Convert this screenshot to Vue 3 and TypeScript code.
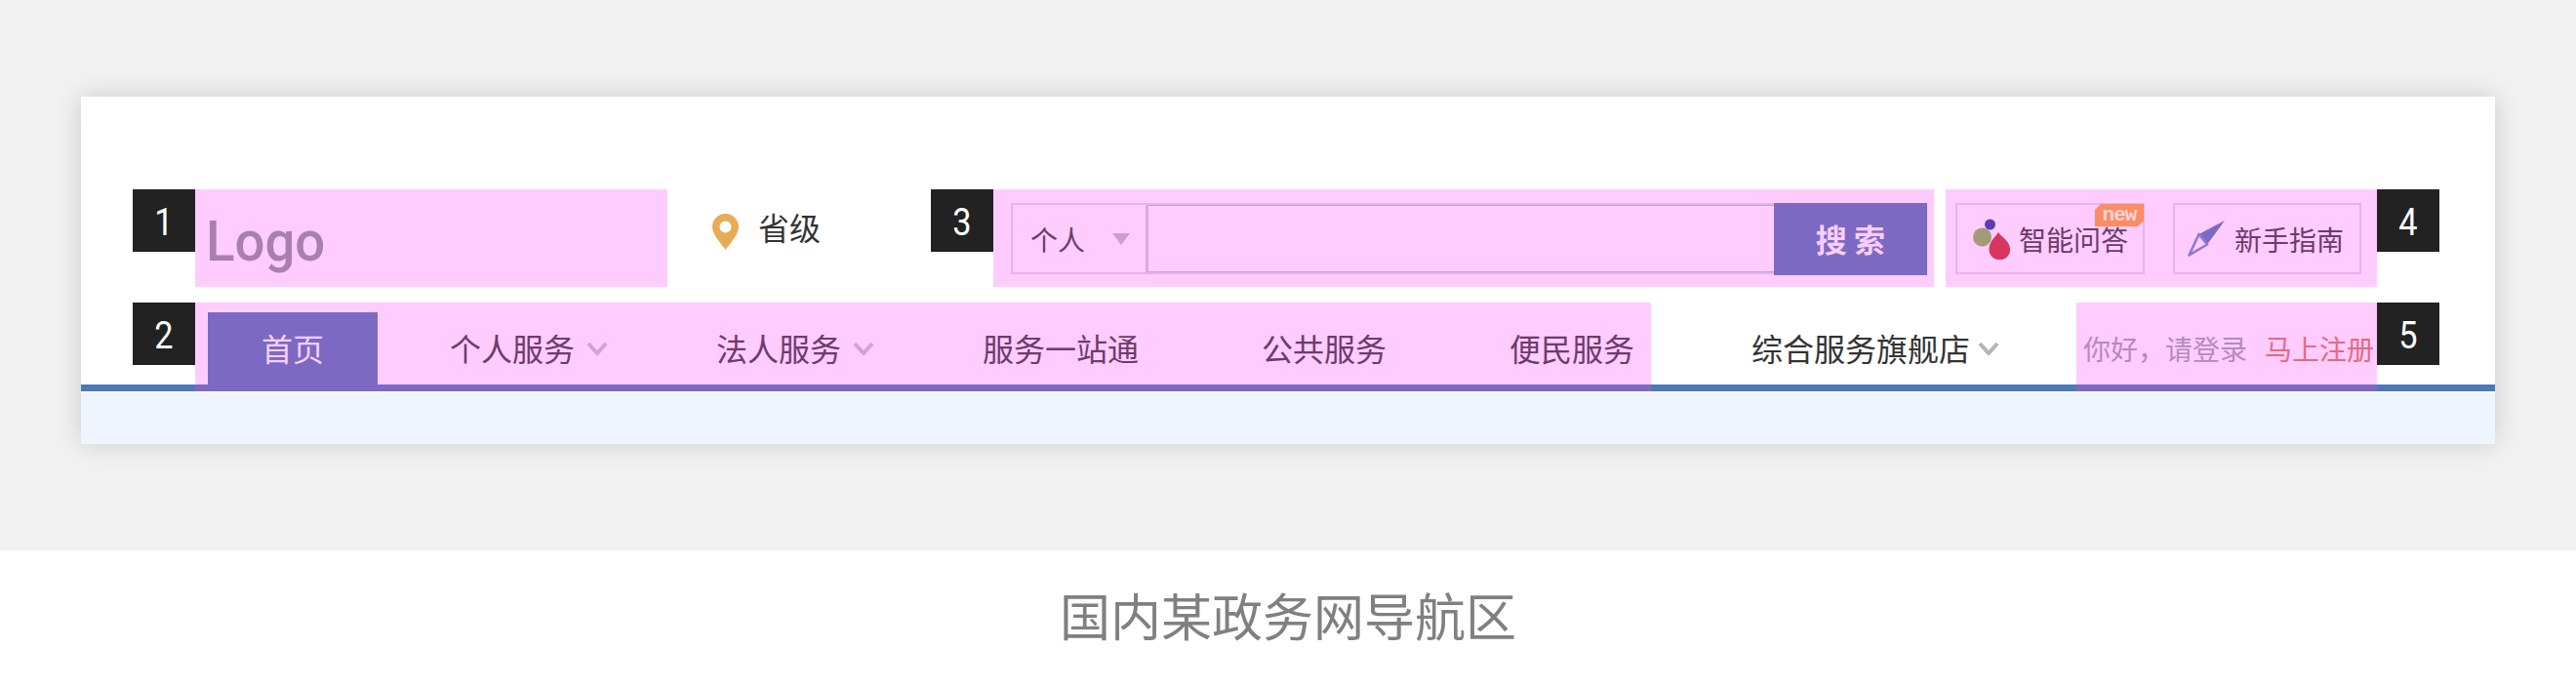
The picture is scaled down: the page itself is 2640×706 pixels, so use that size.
<script setup lang="ts">
interface NavItem { label: string; chevron: boolean }
const navItems: NavItem[] = [
  { label: '个人服务', chevron: true },
  { label: '法人服务', chevron: true },
  { label: '服务一站通', chevron: false },
  { label: '公共服务', chevron: false },
  { label: '便民服务', chevron: false },
]
</script>

<template>
  <div class="page">
    <section class="stage">
      <div class="card">
        <div class="row top">
          <span class="mark"><b>1</b></span>
          <div class="logo-zone"><span class="logo">Logo</span></div>
          <div class="loc">
            <svg class="pin" viewBox="0 0 27 37" width="27" height="37">
              <path fill="#e8ab56" fill-rule="evenodd" d="M13.5 0C6 0 0 6 0 13.5 0 21 8.5 30 13.5 37 18.500 30 27 21 27 13.500 27 6 21 0 13.500 0ZM13.500 7.500a6 6 0 1 1 0 12 6 6 0 0 1 0-12Z" />
            </svg>
            <span>省级</span>
          </div>
          <span class="mark"><b>3</b></span>
          <div class="search-zone">
            <div class="search">
              <div class="scope"><span>个人</span><i class="tri"></i></div>
              <div class="field"></div>
              <div class="go">搜 索</div>
            </div>
          </div>
          <div class="actions">
            <div class="act first">
              <svg class="ic1" viewBox="0 0 39 43" width="39" height="43">
                <circle cx="17.500" cy="7" r="5.500" fill="#5a3fb0" />
                <circle cx="9.500" cy="20" r="9.500" fill="#a39a78" />
                <path fill="#d6365f" d="M26 15c-2 4-9.500 9-9.500 17.500a10.800 10.800 0 0 0 21.600 0C38.100 24 28 19 26 15Z" />
              </svg>
              <span>智能问答</span>
              <span class="badge">new</span>
            </div>
            <div class="act second">
              <svg class="ic2" viewBox="0 0 38 37" width="38" height="37">
                <path fill="#7c69c4" d="M38 0 20 24.500 11.500 14Z" />
                <path fill="none" stroke="#8d7bd0" stroke-width="2.600" stroke-linejoin="round" d="M11.500 14 1.500 35.500 20 24.500Z" />
              </svg>
              <span>新手指南</span>
            </div>
          </div>
          <span class="mark"><b>4</b></span>
        </div>
        <div class="row bottom">
          <span class="mark"><b>2</b></span>
          <nav class="nav">
            <a class="tab">首页</a>
            <a v-for="item in navItems" :key="item.label" class="item" :class="{ plain: !item.chevron }">
              <span>{{ item.label }}</span>
              <svg v-if="item.chevron" class="chev" viewBox="0 0 22 14" width="22" height="14">
                <path d="M2 2 11 12 20 2" fill="none" stroke="#cfa3d6" stroke-width="4" />
              </svg>
            </a>
          </nav>
          <div class="shop">
            <span>综合服务旗舰店</span>
            <svg class="chev" viewBox="0 0 22 14" width="22" height="14">
              <path d="M2 2 11 12 20 2" fill="none" stroke="#b5b5b5" stroke-width="4" />
            </svg>
          </div>
          <div class="login">
            <span class="hello">你好，请登录</span>
            <span class="reg">马上注册</span>
          </div>
          <span class="mark"><b>5</b></span>
        </div>
        <div class="strip"></div>
      </div>
    </section>
    <footer class="caption">国内某政务网导航区</footer>
  </div>
</template>

<style>
html, body { margin: 0; background: #fff; }
</style>

<style scoped>
.page {
  width: 2640px;
  height: 706px;
  overflow: hidden;
  font-family: "Noto Sans CJK SC", "Noto Sans", sans-serif;
  white-space: nowrap;
}
.stage {
  height: 564px;
  box-sizing: border-box;
  padding: 99px 83px 0;
  background: #f1f1f1;
}
.card {
  height: 356px;
  box-sizing: border-box;
  padding-top: 95px;
  background: #fff;
  box-shadow: 0 0 24px rgba(0, 0, 0, 0.16);
}
.row { display: flex; padding: 0 57px 0 53px; }
.top { height: 100px; margin-bottom: 16px; }
.bottom {
  height: 91px;
  background: linear-gradient(to top, #4b78b8 7px, transparent 7px);
}
.mark {
  flex: none;
  width: 64px;
  height: 64px;
  background: #222;
  color: #fff;
  text-align: center;
  overflow: hidden;
}
.mark b {
  display: inline-block;
  font: 400 39px/69px Roboto, sans-serif;
  transform: scaleX(0.88);
}
.logo-zone {
  width: 484px;
  background: #fcf;
  box-sizing: border-box;
  padding-left: 11px;
}
.logo {
  display: inline-block;
  padding-top: 11px;
  font: 500 58px/84px Roboto, sans-serif;
  color: #a97fb0;
  transform: scaleX(0.94);
  transform-origin: left center;
}
.loc {
  width: 270px;
  box-sizing: border-box;
  padding: 25px 0 0 46px;
  display: flex;
  gap: 20px;
  font-size: 32px;
  color: #333;
  align-items: flex-start;
}
.loc span { line-height: 26px; }
.search-zone {
  width: 964px;
  box-sizing: border-box;
  padding: 14px 7px 13px 18px;
  background: #fcf;
  margin-right: 12px;
}
.search {
  display: flex;
  height: 73px;
  box-sizing: border-box;
  border: 2px solid #e6b4ea;
  border-right: 0;
}
.scope {
  width: 139px;
  box-sizing: border-box;
  border-right: 3px solid #dca8e2;
  padding-left: 18px;
  display: flex;
  align-items: center;
  font-size: 28px;
  color: #6f3a6c;
  gap: 28px;
}
.tri {
  width: 0;
  height: 0;
  border-left: 9px solid transparent;
  border-right: 9px solid transparent;
  border-top: 12px solid #cc9fd0;
}
.field {
  flex: 1;
  border-top: 1px solid #c8a0d8;
  border-bottom: 1px solid #c8a0d8;
}
.go {
  flex: none;
  width: 157px;
  margin: -2px 0;
  height: 74px;
  background: #7c69c4;
  color: #f9cdfb;
  font-size: 32px;
  font-weight: 700;
  text-align: center;
  line-height: 72px;
}
.actions {
  width: 442px;
  box-sizing: border-box;
  background: #fcf;
  padding: 14px 16px 13px 10px;
  display: flex;
  gap: 29px;
}
.act {
  position: relative;
  flex: none;
  width: 194px;
  height: 73px;
  box-sizing: border-box;
  border: 2px solid #e6b4ea;
  display: flex;
  align-items: center;
  font-size: 28px;
  color: #6f3a6c;
}
.first { padding-left: 16px; gap: 8px; }
.second { width: 193px; padding-left: 13px; gap: 10px; }
.ic1, .ic2 { flex: none; }
.badge {
  position: absolute;
  top: -1px;
  right: -1px;
  width: 50px;
  height: 23px;
  background: #fb8c63;
  color: #fcd3d8;
  font: 700 21px/23px "Liberation Mono", monospace;
  letter-spacing: -1px;
  text-align: center;
  clip-path: polygon(6px 0, 100% 0, 100% 17px, 44px 100%, 0 100%, 0 6px);
}
.nav {
  flex: none;
  width: 1492px;
  height: 91px;
  box-sizing: border-box;
  padding: 10px 0 0 13px;
  background: #fcf;
  border-bottom: 7px solid #7c69c4;
  display: flex;
  font-size: 32px;
  color: #6f3a6c;
}
.tab {
  flex: none;
  width: 174px;
  background: #7c69c4;
  color: #f5d0fa;
  text-align: center;
  line-height: 72px;
  margin-right: 74px;
}
.item {
  flex: none;
  display: flex;
  align-items: center;
  gap: 12px;
  margin-right: 111px;
  height: 72px;
}
.item.plain { margin-right: 126px; }
.shop {
  flex: none;
  width: 436px;
  height: 84px;
  box-sizing: border-box;
  padding: 10px 0 2px 103px;
  display: flex;
  align-items: center;
  gap: 8px;
  font-size: 32px;
  color: #333;
}
.chev { flex: none; margin-top: 2px; }
.login {
  flex: none;
  width: 308px;
  height: 91px;
  box-sizing: border-box;
  padding: 10px 0 0 7px;
  background: #fcf;
  border-bottom: 7px solid #7c69c4;
  display: flex;
  align-items: center;
  gap: 18px;
  font-size: 28px;
}
.hello { color: #b48abd; }
.reg { color: #e8687e; }
.strip {
  height: 53px;
  margin-top: 1px;
  background: #eef5fe;
}
.caption {
  height: 142px;
  background: #fff;
  color: #808080;
  font-size: 52px;
  line-height: 132px;
  text-align: center;
}
</style>
